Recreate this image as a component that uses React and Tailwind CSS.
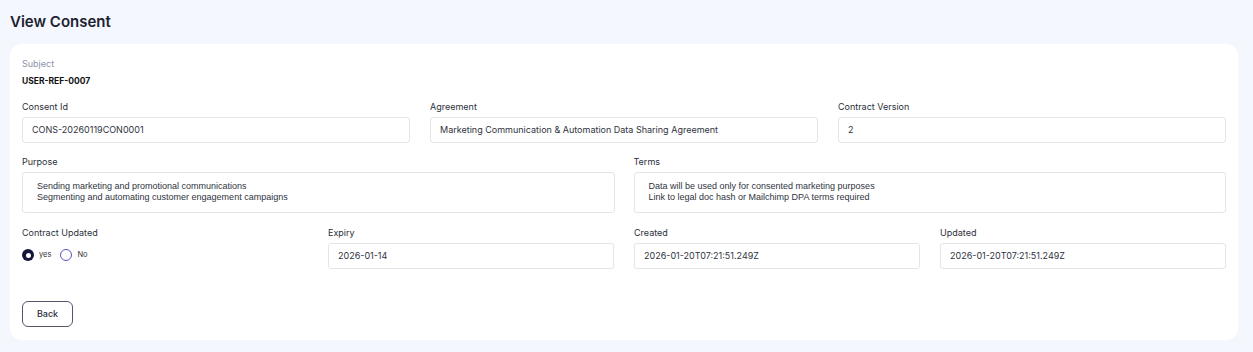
import { useState } from "react";

const consent = {
    subject: "USER-REF-0007",
    consentId: "CONS-20260119CON0001",
    agreement: "Marketing Communication & Automation Data Sharing Agreement",
    contractVersion: "2",
    purpose: "Sending marketing and promotional communications\nSegmenting and automating customer engagement campaigns",
    terms: "Data will be used only for consented marketing purposes\nLink to legal doc hash or Mailchimp DPA terms required",
    expiry: "2026-01-14",
    createdAt: "2026-01-20T07:21:51.249Z",
    updatedAt: "2026-01-20T07:21:51.249Z",
};

export default function App() {
    const [updated, setUpdated] = useState(true);

    return (
        <div className="min-h-[352px] bg-[#f4f7fd] pl-[10px] pr-[15px] pt-[13px] pb-[13px] font-['Inter',sans-serif] text-[#1f2330]">
            <h1 className="text-[15px] font-semibold leading-[18px] text-[#1d2230]">View Consent</h1>

            <div className="mt-[13px] rounded-[12px] bg-white px-[12px] pt-[14px] pb-[13px]">
                <div className="text-[9px] leading-[12px] text-[#8b93a7]">Subject</div>
                <div className="mt-[5px] text-[8.5px] font-bold leading-[12px] text-[#111]">{consent.subject}</div>

                <div className="mt-[14px] grid grid-cols-3 gap-x-[20px]">
                    <Field label="Consent Id" value={consent.consentId} />
                    <Field label="Agreement" value={consent.agreement} />
                    <Field label="Contract Version" value={consent.contractVersion} />
                </div>

                <div className="mt-[13px] grid grid-cols-2 gap-x-[19px]">
                    <Area label="Purpose" value={consent.purpose} />
                    <Area label="Terms" value={consent.terms} />
                </div>

                <div className="mt-[14px] grid grid-cols-4 gap-x-[20px]">
                    <div>
                        <Label>Contract Updated</Label>
                        <div className="mt-[10px] flex items-center gap-[9px]">
                            <Radio checked={updated} onClick={() => setUpdated(true)} label="yes" />
                            <Radio checked={!updated} onClick={() => setUpdated(false)} label="No" />
                        </div>
                    </div>
                    <Field label="Expiry" value={consent.expiry} />
                    <Field label="Created" value={consent.createdAt} />
                    <Field label="Updated" value={consent.updatedAt} />
                </div>

                <button className="mt-[32px] h-[26px] w-[51px] rounded-[6px] border border-[#55556a] text-[9px] font-medium text-[#2a2d3a]">
                    Back
                </button>
            </div>
        </div>
    );
}

function Label({ children }) {
    return <div className="text-[9px] leading-[12px] text-[#2b2f3a]">{children}</div>;
}

function Field({ label, value }) {
    return (
        <div>
            <Label>{label}</Label>
            <div className="mt-[4px] flex h-[26px] items-center rounded-[3px] border border-[#e3e5ea] px-[9px] text-[9px] text-[#2f3340]">
                {value}
            </div>
        </div>
    );
}

function Area({ label, value }) {
    return (
        <div>
            <Label>{label}</Label>
            <div className="mt-[4px] h-[41px] whitespace-pre-line rounded-[3px] border border-[#e3e5ea] pl-[14px] pt-[8px] font-['Liberation_Sans',Arial,sans-serif] text-[9px] leading-[10.5px] text-[#2f3340]">
                {value}
            </div>
        </div>
    );
}

function Radio({ checked, onClick, label }) {
    return (
        <button onClick={onClick} className="flex items-center gap-[5px]">
            {checked ? (
                <span className="flex h-[12px] w-[12px] items-center justify-center rounded-full bg-[#15153a]">
                    <span className="h-[5px] w-[5px] rounded-full bg-white" />
                </span>
            ) : (
                <span className="h-[12px] w-[12px] rounded-full border-[1.5px] border-[#5d52c8]" />
            )}
            <span className="text-[7.5px] text-[#333]">{label}</span>
        </button>
    );
}
